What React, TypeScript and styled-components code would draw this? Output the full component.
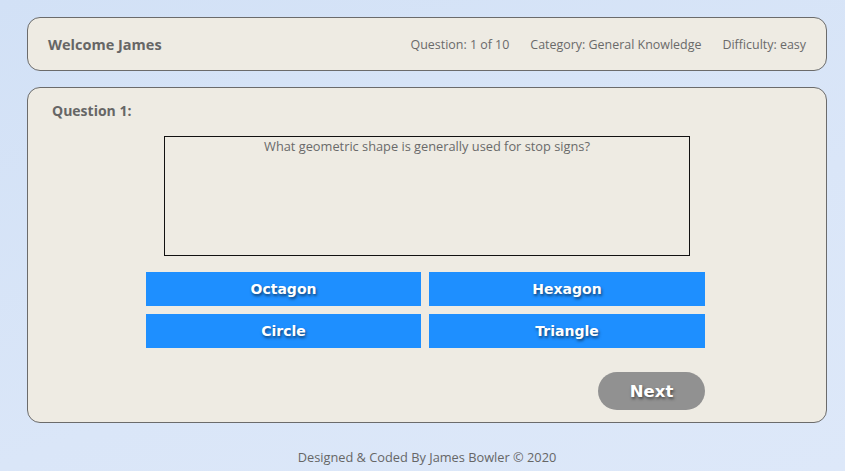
import React from "react";
import styled, { createGlobalStyle } from "styled-components";

const Global = createGlobalStyle`
  html, body { margin: 0; padding: 0; }
  body {
    min-height: 471px;
    background: linear-gradient(160deg, #d2e1f6 0%, #dae6f8 60%, #dde8f9 100%);
    font-family: "Open Sans", "Noto Sans", sans-serif;
    color: #666;
  }
`;

const Page = styled.div`
  width: 845px;
  height: 471px;
  box-sizing: border-box;
  padding: 17px 18px 0 27px;
  display: flex;
  flex-direction: column;
`;

const Card = styled.div`
  width: 800px;
  box-sizing: border-box;
  background: #eeebe3;
  border: 1px solid #6b6b6b;
  border-radius: 13px;
`;

const Header = styled(Card)`
  height: 54px;
  display: flex;
  align-items: center;
  justify-content: space-between;
  padding: 0 20px 0 20px;
`;

const Welcome = styled.div`
  font-weight: 700;
  font-size: 14.5px;
  color: #666;
`;

const Stats = styled.div`
  display: flex;
  gap: 21px;
  font-size: 12.45px;
  color: #6a6a6a;
`;

const Main = styled(Card)`
  margin-top: 16px;
  height: 336px;
  padding: 13px 0 0 24px;
  display: flex;
  flex-direction: column;
`;

const QTitle = styled.div`
  font-weight: 700;
  font-size: 14px;
  color: #666;
  line-height: 20px;
`;

const Body = styled.div`
  display: flex;
  flex-direction: column;
  align-items: center;
  margin-left: -24px;
  margin-top: 15px;
`;

const QBox = styled.div`
  width: 526px;
  height: 120px;
  box-sizing: border-box;
  border: 1px solid #111;
  text-align: center;
  font-size: 12.8px;
  line-height: 18px;
  color: #6a6a6a;
`;

const Answers = styled.div`
  margin-top: 16px;
  margin-right: 3px;
  width: 559px;
  display: grid;
  grid-template-columns: 275px 276px;
  column-gap: 8px;
  row-gap: 8px;
`;

const Answer = styled.button`
  height: 34px;
  border: none;
  background: #1e8fff;
  color: #fff;
  font-family: "DejaVu Sans", "Open Sans", sans-serif;
  font-weight: 700;
  font-size: 14px;
  text-shadow: 1px 2px 3px rgba(0, 0, 0, 0.55);
  padding: 0;
`;

const Footer = styled.div`
  width: 559px;
  margin-right: 3px;
  display: flex;
  justify-content: flex-end;
  margin-top: 24px;
`;

const Next = styled.button`
  width: 107px;
  height: 38px;
  border: none;
  border-radius: 19px;
  background: #919191;
  color: #fff;
  font-family: "DejaVu Sans", "Open Sans", sans-serif;
  font-weight: 700;
  font-size: 16.5px;
  text-shadow: 1px 2px 3px rgba(0, 0, 0, 0.5);
  padding: 0;
`;

const Credit = styled.div`
  width: 800px;
  text-align: center;
  margin-top: 25px;
  font-size: 12.8px;
  color: #666;
`;

const answers = ["Octagon", "Hexagon", "Circle", "Triangle"];

export default function App() {
  return (
    <>
      <Global />
      <Page>
        <Header>
          <Welcome>Welcome James</Welcome>
          <Stats>
            <span>Question: 1 of 10</span>
            <span>Category: General Knowledge</span>
            <span>Difficulty: easy</span>
          </Stats>
        </Header>
        <Main>
          <QTitle>Question 1:</QTitle>
          <Body>
            <QBox>What geometric shape is generally used for stop signs?</QBox>
            <Answers>
              {answers.map((a) => (
                <Answer key={a}>{a}</Answer>
              ))}
            </Answers>
            <Footer>
              <Next>Next</Next>
            </Footer>
          </Body>
        </Main>
        <Credit>Designed &amp; Coded By James Bowler © 2020</Credit>
      </Page>
    </>
  );
}
